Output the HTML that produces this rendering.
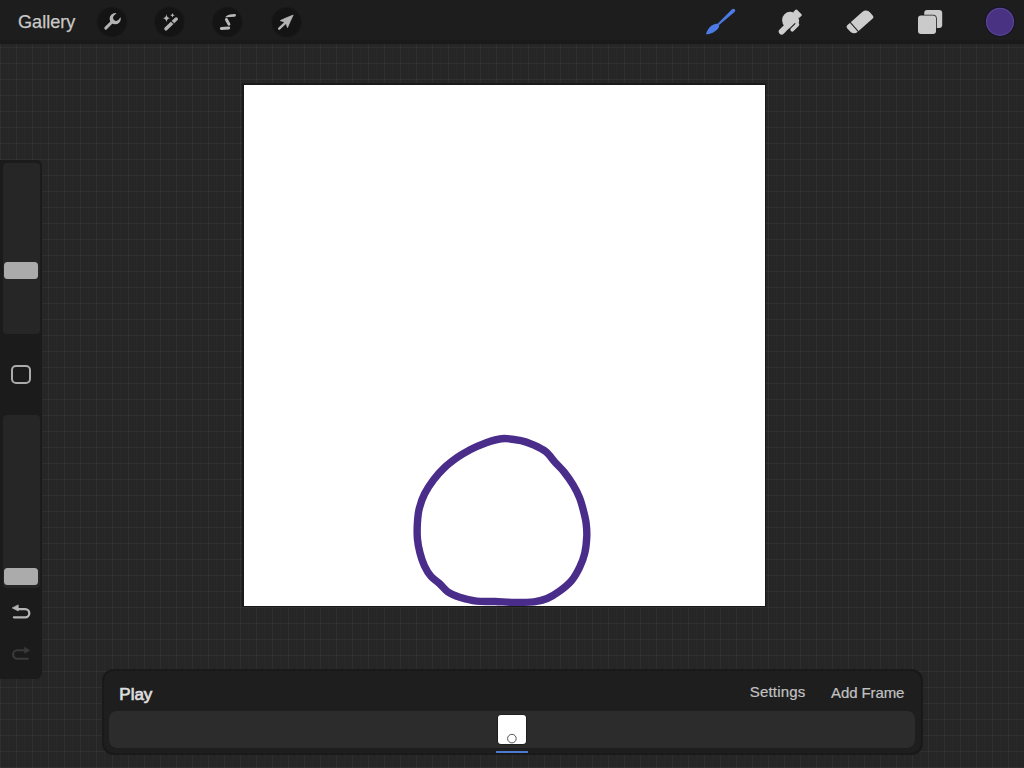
<!DOCTYPE html>
<html><head><meta charset="utf-8">
<style>
*{margin:0;padding:0;box-sizing:border-box}
html,body{width:1024px;height:768px;overflow:hidden;background:#262626;font-family:"Liberation Sans",sans-serif}
#grid{position:absolute;left:0;top:0;width:1024px;height:768px;
 background-image:
  linear-gradient(to right, rgba(255,255,255,0.04) 1px, transparent 1px),
  linear-gradient(to bottom, rgba(255,255,255,0.04) 1px, transparent 1px),
  linear-gradient(to right, rgba(255,255,255,0.014) 1px, transparent 1px);
 background-size:16px 16px,16px 16px,16px 16px;
 background-position:0 0, 0 15px, 8px 0;}
#topbar{position:absolute;left:0;top:0;width:1024px;height:44px;background:linear-gradient(to bottom,#1d1d1d 0,#1d1d1d 39px,#1a1a1a 41px,#191919 44px)}
.tb-circ{position:absolute;top:6.5px;width:31px;height:31px;border-radius:50%;background:#161616}
.tb-circ svg{position:absolute;left:0;top:0}
#gallery{position:absolute;left:18px;top:12.4px;font-size:18.1px;color:#c9c9c9;letter-spacing:0;-webkit-text-stroke:0.25px #c9c9c9}
#canvas{position:absolute;left:244px;top:85px;width:521px;height:521px;background:#fff;box-shadow:0 0 0 1px #181818,-0.5px -0.5px 0 1.5px #1b1b1b;overflow:hidden}
#sidebar{position:absolute;left:0;top:160px;width:41.8px;height:518.8px;background:#1b1b1b;border-radius:0 5px 6px 0}
.track{position:absolute;left:3px;width:36.5px;background:#262626;border-radius:4px}
.thumb{position:absolute;left:4px;width:34px;height:16.8px;background:#ababab;border-radius:3.5px}
#bottom{position:absolute;left:102px;top:669.3px;width:820.5px;height:85.5px;background:#1e1e1e;border-radius:12px;box-shadow:inset 0 0 0 2px #191919}
#strip{position:absolute;left:6.6px;top:41.5px;width:806.6px;height:37.2px;background:#2c2c2c;border-radius:8px}
</style></head><body>
<div id="grid"></div>
<div id="topbar">
 <div id="gallery">Gallery</div>
 <svg width="1024" height="44" viewBox="0 0 1024 44" style="position:absolute;left:0;top:0">
  <defs>
   <radialGradient id="cg"><stop offset="0" stop-color="#131313"/><stop offset="0.88" stop-color="#141414"/><stop offset="1" stop-color="#1c1c1c"/></radialGradient>
  </defs>
  <g fill="url(#cg)">
   <circle cx="112" cy="22" r="15.8"/>
   <circle cx="169.5" cy="22" r="15.8"/>
   <circle cx="227.3" cy="22" r="15.8"/>
   <circle cx="286.5" cy="22.3" r="15.8"/>
  </g>
  <!-- wrench -->
  <mask id="wm" maskUnits="userSpaceOnUse" x="90" y="0" width="50" height="44">
   <rect x="90" y="0" width="50" height="44" fill="#fff"/>
   <g transform="translate(115.2,18.7) rotate(45)" fill="#000">
    <circle cx="0" cy="-1.2" r="2.9"/>
    <rect x="-2.9" y="-8" width="5.8" height="6.8"/>
   </g>
  </mask>
  <g mask="url(#wm)"><g transform="translate(115.2,18.7) rotate(45)" fill="#b3b3b3">
   <circle cx="0" cy="0" r="5.6"/>
   <rect x="-1.45" y="0" width="2.9" height="14.8" rx="1.45"/>
  </g></g>
  <!-- wand -->
  <g>
   <line x1="166" y1="28.8" x2="176.2" y2="19" stroke="#b3b3b3" stroke-width="3.5" stroke-linecap="round"/>
   <line x1="171.1" y1="21.1" x2="173.8" y2="23.6" stroke="#131313" stroke-width="1.2"/>
   <path fill="#b3b3b3" d="M166.45,14.1 Q166.75,17.9 170.2,18.2 Q166.75,18.5 166.45,22.3 Q166.15,18.5 162.7,18.2 Q166.15,17.9 166.45,14.1Z"/>
   <path fill="#b3b3b3" d="M172.5,13.1 Q172.7,15.1 174.7,15.3 Q172.7,15.5 172.5,17.5 Q172.3,15.5 170.3,15.3 Q172.3,15.1 172.5,13.1Z"/>
  </g>
  <!-- selection S -->
  <path fill="#b8b8b8" d="M225.3,16.9 Q226.8,14.9 229.8,14.4 L234.4,13.95 Q236,13.9 236,15.35 Q236,16.75 234.4,16.8 L226.2,17.3 Q225,17.35 225.3,16.9Z"/>
  <g stroke="#b8b8b8" stroke-linecap="round" fill="none">
   <line x1="226.4" y1="19.5" x2="228.9" y2="24.1" stroke-width="3"/>
   <line x1="221.3" y1="28.5" x2="228.7" y2="28" stroke-width="2.9"/>
  </g>
  <!-- transform arrow -->
  <g fill="#b3b3b3">
   <path d="M293.2,15.1 Q286.5,17.6 280.2,20.6 Q282.8,21.6 285.6,22.5 Q286.6,25 287.5,27.7 Q290.2,21.4 293.2,15.1 Z" stroke="#b3b3b3" stroke-width="0.7" stroke-linejoin="round"/>
   <line x1="279.2" y1="28.7" x2="286.6" y2="21.6" stroke="#b3b3b3" stroke-width="2.5" stroke-linecap="round"/>
  </g>
  <!-- brush -->
  <g fill="#4d7be6">
   <path transform="translate(717.3,25.3) rotate(-42.5)" d="M0.3,-0.95 L21.7,-1.9 Q23.6,-1.9 23.6,0 Q23.6,1.9 21.7,1.9 L0.3,0.95 Z"/>
   <path transform="translate(717.7,25.5) rotate(-34)" d="M1.2,0 C1.2,-2.7 -2.2,-3.4 -5.4,-3.3 C-9,-3.1 -12.4,-1.3 -14.6,0.6 C-12,2.8 -8.6,3.4 -5.4,3.3 C-2.2,3.2 1.2,2.7 1.2,0 Z"/>
  </g>
  <!-- smudge -->
  <g fill="#cdcdcd" transform="translate(790,22) rotate(-45)">
   <rect x="9" y="-4.7" width="4.6" height="8.4" rx="1"/>
   <ellipse cx="1.6" cy="-0.7" rx="8.4" ry="8.7"/>
   <rect x="-15.6" y="-2" width="16" height="5.8" rx="2.9"/>
   <rect x="-5.8" y="5.2" width="11" height="3.8" rx="1.9"/>
   <line x1="-9" y1="4.6" x2="2.4" y2="4.6" stroke="#1d1d1d" stroke-width="1.1" stroke-linecap="round"/>
  </g>
  <!-- eraser -->
  <g transform="translate(860,21.9) rotate(-41.6)">
   <path fill="#cdcdcd" d="M-11.8,-5.9 L8.6,-5.9 A5.2,5.2 0 0 1 13.8,-0.7 L13.8,3.9 A2,2 0 0 1 11.8,5.9 L-8.6,5.9 A5.2,5.2 0 0 1 -13.8,0.7 L-13.8,-3.9 A2,2 0 0 1 -11.8,-5.9 Z"/>
   <rect x="-8.1" y="-6.5" width="1" height="13" fill="#1d1d1d"/>
  </g>
  <!-- layers -->
  <rect x="924.2" y="10" width="18" height="18" rx="3" fill="#cacaca"/>
  <rect x="917.2" y="14.7" width="19.6" height="20.1" rx="3.8" fill="#1d1d1d"/>
  <rect x="918" y="15.5" width="18" height="18.5" rx="3" fill="#cacaca"/>
  <!-- color -->
  <circle cx="1000" cy="21.8" r="15.3" fill="#17132a"/>
  <circle cx="1000" cy="21.8" r="14.1" fill="#56468e"/>
  <circle cx="1000" cy="21.8" r="12.9" fill="#4a3282"/>
 </svg>
</div>
<div id="canvas">
 <svg width="521" height="521" viewBox="244 85 521 521" style="position:absolute;left:0;top:0">
  <path d="M501.4,438.7 C507.7,438.1 515.6,439.5 521.0,440.6 C526.4,441.7 529.9,443.4 534.0,445.2 C538.1,447.0 542.3,448.9 545.8,451.7 C549.3,454.5 551.9,458.7 554.9,462.1 C557.9,465.5 561.0,468.1 564.0,471.9 C567.0,475.7 570.5,480.6 573.1,484.9 C575.7,489.2 577.9,493.6 579.6,497.9 C581.3,502.2 582.4,506.7 583.5,510.9 C584.6,515.1 585.6,518.8 586.1,523.0 C586.6,527.2 587.0,531.0 586.8,536.0 C586.6,541.0 586.0,547.8 584.8,553.0 C583.6,558.2 581.8,562.8 579.6,567.3 C577.4,571.8 575.0,576.4 571.8,580.3 C568.5,584.2 564.2,587.7 560.1,590.7 C556.0,593.7 551.5,596.6 547.1,598.5 C542.8,600.4 539.4,601.1 534.0,601.8 C528.6,602.4 521.0,602.4 514.5,602.4 C508.0,602.4 501.3,601.7 495.0,601.5 C488.7,601.3 482.5,601.8 476.6,601.1 C470.7,600.4 464.5,598.7 459.7,597.2 C454.9,595.7 451.2,594.2 448.0,592.0 C444.8,589.8 443.0,586.8 440.2,584.2 C437.4,581.6 433.6,579.4 431.0,576.4 C428.4,573.4 426.3,569.9 424.5,566.0 C422.7,562.1 421.2,557.6 420.0,553.0 C418.8,548.4 417.8,543.6 417.4,538.6 C417.0,533.6 417.1,528.0 417.4,523.0 C417.7,518.0 418.1,513.1 419.3,508.3 C420.5,503.5 422.1,498.8 424.5,494.0 C426.9,489.2 430.3,484.0 433.6,479.7 C436.9,475.4 440.2,471.7 444.1,468.0 C448.0,464.3 452.8,460.7 457.1,457.6 C461.4,454.6 465.8,452.0 470.1,449.7 C474.4,447.4 477.9,445.7 483.1,443.9 C488.3,442.1 495.1,439.2 501.4,438.7Z" fill="none" stroke="#4a2d8a" stroke-width="7.4" stroke-linejoin="round"/>
 </svg>
</div>
<div id="sidebar">
 <div class="track" style="top:3px;height:171px"></div>
 <div class="thumb" style="top:102.4px"></div>
 <div style="position:absolute;left:11.2px;top:204.7px;width:19.6px;height:19.2px;border:2px solid #ababab;border-radius:5px"></div>
 <div class="track" style="top:255px;height:173px"></div>
 <div class="thumb" style="top:408.4px"></div>
 <svg width="42" height="518" viewBox="0 160 42 518" style="position:absolute;left:0;top:0">
  <path d="M12.2,607.9 L18.2,604.9 L18.3,611 Z" fill="#b5b5b5" stroke="#b5b5b5" stroke-width="0.7" stroke-linejoin="round"/>
  <path d="M17.5,609.1 L25.2,609.1 A4.1,4.1 0 0 1 25.2,617.3 L13.9,617.3" fill="none" stroke="#b5b5b5" stroke-width="2.3" stroke-linecap="round"/>
  <path d="M29.6,650.3 L24.6,647.3 L24.6,653.3 Z" fill="#3a3a3a" stroke="#3a3a3a" stroke-width="0.7" stroke-linejoin="round"/>
  <path d="M25,650.3 L17.3,650.3 A4.2,4.2 0 0 0 17.3,658.7 L27.8,658.7" fill="none" stroke="#3a3a3a" stroke-width="2.1" stroke-linecap="round"/>
 </svg>
</div>
<div id="bottom">
 <div style="position:absolute;left:17.3px;top:15.4px;font-size:17px;color:#dedede;letter-spacing:0;-webkit-text-stroke:0.7px #dedede">Play</div>
 <div style="position:absolute;left:647.7px;top:14px;font-size:15px;color:#c2c2c2;letter-spacing:0.2px;-webkit-text-stroke:0.2px #c2c2c2">Settings</div>
 <div style="position:absolute;left:729px;top:14.4px;font-size:15px;color:#c2c2c2;letter-spacing:-0.1px;-webkit-text-stroke:0.2px #c2c2c2">Add Frame</div>
 <div id="strip"></div>
 <div style="position:absolute;left:396px;top:46px;width:28.3px;height:28.7px;background:#fff;border-radius:3px;box-shadow:0 0 0 0.6px #151515"></div>
 <svg width="30" height="30" viewBox="0 0 30 30" style="position:absolute;left:395px;top:45px">
  <circle cx="14.9" cy="24.6" r="4.3" fill="none" stroke="#555" stroke-width="1"/>
 </svg>
 <div style="position:absolute;left:393.7px;top:81.8px;width:32.4px;height:2.3px;background:#4a7ad0"></div>
</div>
</body></html>
